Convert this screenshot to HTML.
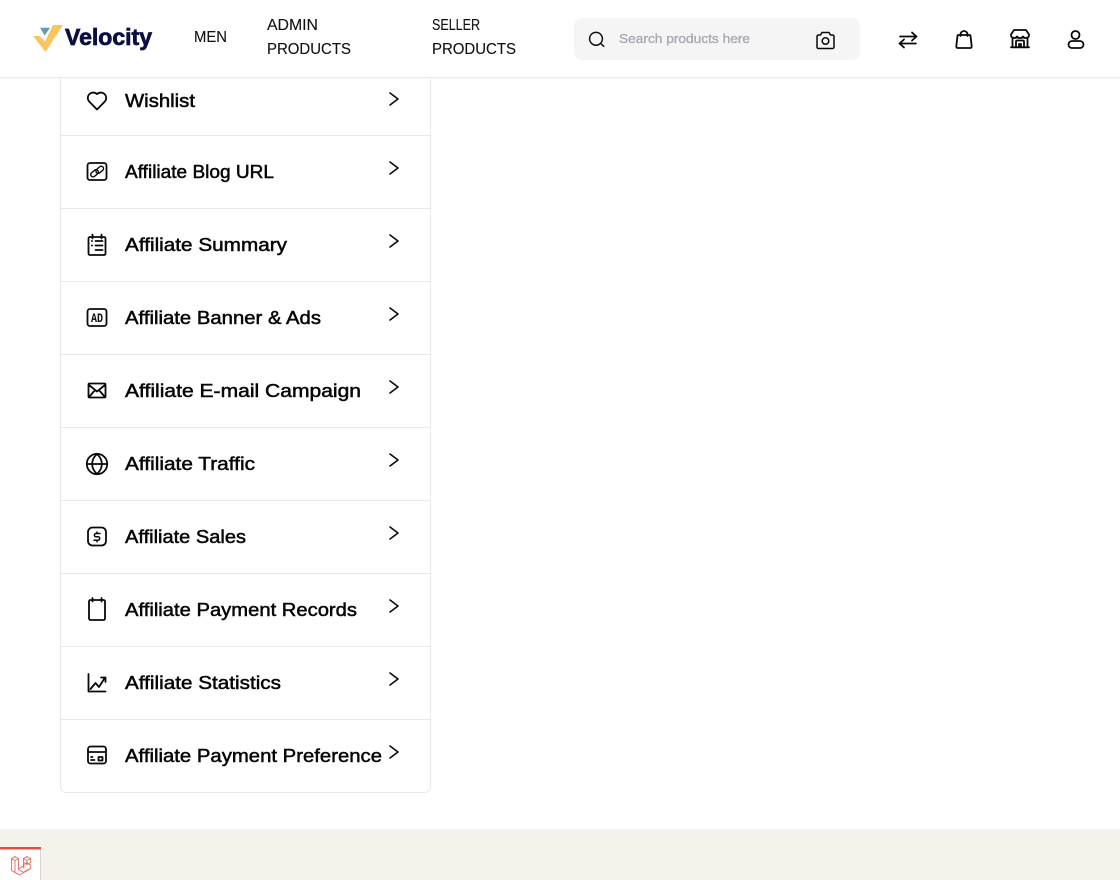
<!DOCTYPE html>
<html lang="en"><head><meta charset="utf-8"><title>Velocity</title>
<style>
html,body{margin:0;padding:0;background:#fff;width:1120px;height:880px;overflow:hidden}
svg{display:block}
text{font-family:"Liberation Sans",sans-serif}
.m{font-size:18.5px;fill:#060606;stroke:#060606;stroke-width:.5px}
.n{font-size:15.5px;fill:#111;stroke:#111;stroke-width:.12px}
.i{fill:none;stroke:#0a0a0a;stroke-width:1.8;stroke-linecap:round;stroke-linejoin:round}
.c{fill:none;stroke:#0a0a0a;stroke-width:1.6;stroke-linecap:round;stroke-linejoin:round}
</style></head><body>
<svg width="1120" height="880" viewBox="0 0 1120 880" xmlns="http://www.w3.org/2000/svg">
<rect width="1120" height="880" fill="#fff"/>
<!-- card -->
<path d="M60.500 70V786.500a6 6 0 0 0 6 6H424.500a6 6 0 0 0 6-6V70" fill="#fff" stroke="#e8e8e8"/>
<g stroke="#e8e8e8"><path d="M61 135.500H430M61 208.500H430M61 281.500H430M61 354.500H430M61 427.500H430M61 500.500H430M61 573.500H430M61 646.500H430M61 719.500H430"/></g>
<!-- labels -->
<text class="m" x="125" y="107" textLength="70" lengthAdjust="spacingAndGlyphs">Wishlist</text>
<text class="m" x="125" y="178" textLength="149" lengthAdjust="spacingAndGlyphs">Affiliate Blog URL</text>
<text class="m" x="125" y="251" textLength="162" lengthAdjust="spacingAndGlyphs">Affiliate Summary</text>
<text class="m" x="125" y="324" textLength="196" lengthAdjust="spacingAndGlyphs">Affiliate Banner &amp; Ads</text>
<text class="m" x="125" y="397" textLength="236" lengthAdjust="spacingAndGlyphs">Affiliate E-mail Campaign</text>
<text class="m" x="125" y="470" textLength="130" lengthAdjust="spacingAndGlyphs">Affiliate Traffic</text>
<text class="m" x="125" y="543" textLength="121" lengthAdjust="spacingAndGlyphs">Affiliate Sales</text>
<text class="m" x="125" y="616" textLength="232" lengthAdjust="spacingAndGlyphs">Affiliate Payment Records</text>
<text class="m" x="125" y="689" textLength="156" lengthAdjust="spacingAndGlyphs">Affiliate Statistics</text>
<text class="m" x="125" y="762" textLength="257" lengthAdjust="spacingAndGlyphs">Affiliate Payment Preference</text>
<!-- chevrons -->
<g class="c">
<path d="M390 93l8 6-8 6"/><path d="M390 162l8 6-8 6"/><path d="M390 235l8 6-8 6"/><path d="M390 308l8 6-8 6"/><path d="M390 381l8 6-8 6"/><path d="M390 454l8 6-8 6"/><path d="M390 527l8 6-8 6"/><path d="M390 600l8 6-8 6"/><path d="M390 673l8 6-8 6"/><path d="M390 746l8 6-8 6"/>
</g>
<!-- menu icons -->
<g class="i">
<path d="M97 109.500L88.900 101.200a5.400 5.400 0 0 1 8.100-7.100 5.400 5.400 0 0 1 8.100 7.100z"/>
<rect x="87.500" y="163" width="19" height="17" rx="2.500"/>
<g style="stroke-width:1.400"><rect x="90.300" y="171" width="8.500" height="4.600" rx="2.300" transform="rotate(-40 94.500 173.300)"/><rect x="95.500" y="167.500" width="8.500" height="4.600" rx="2.300" transform="rotate(-40 99.700 169.800)"/></g>
<rect x="88.500" y="237" width="17" height="18" rx="1.500"/>
<path d="M92.500 234.500v4M101.500 234.500v4M91.800 241h.3M95.500 241h7M91.800 245.500h.3M95.500 245.500h7M95.500 250h7"/>
<rect x="87.500" y="309" width="19" height="17" rx="2.500"/>
<path d="M89.500 383.500h15a1 1 0 0 1 1 1v12a1 1 0 0 1-1 1h-15a1 1 0 0 1-1-1v-12a1 1 0 0 1 1-1zM89 385l8 6.500 8-6.500M89.500 396.500l5.500-6.500M104.500 396.500l-5.500-6.500"/>
<circle cx="97" cy="464" r="10.200"/>
<path d="M87 464h20M97 454c-6.500 6-6.500 14 0 20M97 454c6.500 6 6.500 14 0 20"/>
<rect x="88" y="527.500" width="18" height="18" rx="4.500"/>
<path d="M100 533.500h-4a1.600 1.600 0 0 0 0 3.300h2a1.700 1.700 0 0 1 0 3.400h-4M97 532v1.500M97 540.200v1.500" style="stroke-width:1.500"/>
<path d="M93 600h-2.500a1.500 1.500 0 0 0-1.500 1.500v17a1.500 1.500 0 0 0 1.500 1.500h13a1.500 1.500 0 0 0 1.500-1.500v-17a1.500 1.500 0 0 0-1.500-1.500H101M92.500 598v3.500M101.500 598v3.500M93 600h8"/>
<path d="M88.500 674v17.500h17M90.500 689l5-6 3.500 4 6-9.500M101 677.500h4.500v4.500"/>
<rect x="88" y="746.500" width="18" height="17" rx="2.500"/>
<path d="M88 752h18M91 760h3.500M91 757h1.500"/>
<rect x="98.500" y="757" width="4" height="3.500"/>
</g>
<text x="91" y="322" font-size="12.500" font-weight="700" fill="#0a0a0a" style="font-family:'Liberation Mono',monospace" textLength="12" lengthAdjust="spacingAndGlyphs">AD</text>
<!-- footer -->
<rect y="829" width="1120" height="51" fill="#f5f2eb"/>
<rect y="847" width="40" height="33" fill="#fff"/>
<rect x="40" y="848" width="1" height="32" fill="#d8d6d2"/>
<rect y="847" width="41" height="2.500" fill="#e5503f"/>
<g fill="none" stroke="#e36a5e" stroke-width=".9" stroke-linejoin="round">
<path d="M11.500 858.500l3.500-2 3.500 2v11l5 2.800 6-3.400M11.500 858.500v12l7.800 4.500 11-6.200v-4l-3.500-2-3 1.700v4M15 860.500l3.500-2M15 860.500v11.800l4.300 2.700M11.500 858.500l3.500 2M23.500 858.500l3.500-2 3.500 2v4l-3.500 2-3.500-2zM23.500 858.500l3.500 2 3.500-2M27 860.500v4M23.500 862.500v3.500l-5 2.800"/>
</g>
<!-- header -->
<rect width="1120" height="77" fill="#fff"/>
<rect y="77" width="1120" height="1" fill="#ebebeb"/>
<rect y="78" width="1120" height="1" fill="#f7f7f7"/>
<!-- logo -->
<path d="M33 36H39.500L45 41.500 53 25H63L45.500 52z" fill="#f9c55f"/>
<path d="M40 27.700H50L44.700 35.500z" fill="#6f93b4"/>
<text x="65" y="45" font-size="23" font-weight="700" fill="#0b0f3f" stroke="#0b0f3f" stroke-width=".7" textLength="87" lengthAdjust="spacingAndGlyphs">Velocity</text>
<!-- nav -->
<text class="n" x="194" y="42" textLength="33" lengthAdjust="spacingAndGlyphs">MEN</text>
<text class="n" x="267" y="30" textLength="51" lengthAdjust="spacingAndGlyphs">ADMIN</text>
<text class="n" x="267" y="54" textLength="84" lengthAdjust="spacingAndGlyphs">PRODUCTS</text>
<text class="n" x="432" y="30" textLength="48" lengthAdjust="spacingAndGlyphs">SELLER</text>
<text class="n" x="432" y="54" textLength="84" lengthAdjust="spacingAndGlyphs">PRODUCTS</text>
<!-- search -->
<rect x="574" y="18" width="286" height="42" rx="8" fill="#f5f5f5"/>
<circle cx="596" cy="38.800" r="6.400" fill="none" stroke="#111" stroke-width="1.500"/>
<path d="M600.800 43.500l3 2.800" stroke="#111" stroke-width="1.500" stroke-linecap="round"/>
<text x="619" y="43" font-size="13" fill="#a8a8b2" stroke="#a8a8b2" stroke-width=".35" textLength="131" lengthAdjust="spacingAndGlyphs">Search products here</text>
<g class="i" style="stroke-width:1.500">
<path d="M818.500 48.500h14a1.500 1.500 0 0 0 1.500-1.500v-10.500a1.500 1.500 0 0 0-1.500-1.500h-2l-1.500-2.500h-7l-1.500 2.500h-2a1.500 1.500 0 0 0-1.500 1.500v10.500a1.500 1.500 0 0 0 1.500 1.500z"/>
<circle cx="825.500" cy="41" r="3.300"/>
</g>
<!-- actions -->
<g class="i">
<path d="M900 36.500h16.500M912 32.500l4.500 4-4.500 4M916 43.500h-16.500M904 39.500l-4.500 4 4.500 4"/>
<path d="M958.500 35h11a1 1 0 0 1 1 1l1.200 10.300a1.500 1.500 0 0 1-1.500 1.700h-12.400a1.500 1.500 0 0 1-1.500-1.700l1.200-10.300a1 1 0 0 1 1-1zM960.500 36v-1.500a3.500 3.500 0 0 1 7 0v1.500"/>
<path d="M1012.500 47V38M1027.500 47V38M1011 47.300h18M1016 47V41.500a1 1 0 0 1 1-1h6a1 1 0 0 1 1 1V47M1019 47v-3h2v3"/>
<path d="M1014 30h12l3 4.500a3 3 0 0 1-3 3.500 3 3 0 0 1-3-1.500 3 3 0 0 1-3 1.500 3 3 0 0 1-3-1.500 3 3 0 0 1-3 1.500 3 3 0 0 1-3-3.500z"/>
<circle cx="1075.500" cy="35" r="4"/>
<rect x="1068.500" y="41" width="15" height="7" rx="3.500"/>
</g>
</svg>
</body></html>
